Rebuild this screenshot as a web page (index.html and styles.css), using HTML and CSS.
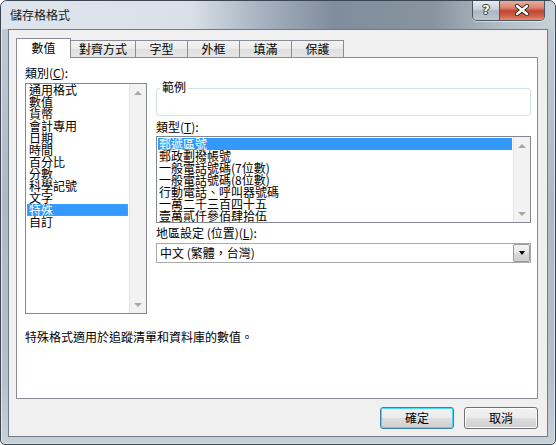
FILE: index.html
```html
<!DOCTYPE html>
<html lang="zh-Hant">
<head>
<meta charset="utf-8">
<title>儲存格格式</title>
<link rel="stylesheet" href="styles.css">
</head>
<body>
<div class="window">
  <div class="titlebar">
    <span class="title">儲存格格式</span>
    <div class="caption">
      <div class="cbtn help"><span>?</span></div>
      <div class="cbtn close">
        <svg width="16" height="12" viewBox="0 0 16 12">
          <path d="M3 2 L13 10 M13 2 L3 10" stroke="#3a2a28" stroke-width="4.2" stroke-linecap="round"/>
          <path d="M3 2 L13 10 M13 2 L3 10" stroke="#ffffff" stroke-width="2.4" stroke-linecap="round"/>
        </svg>
      </div>
    </div>
  </div>
  <div class="client">
    <div class="tabs">
      <div class="tab active">數值</div>
      <div class="tab wide">對齊方式</div>
      <div class="tab">字型</div>
      <div class="tab">外框</div>
      <div class="tab">填滿</div>
      <div class="tab">保護</div>
    </div>
    <div class="panel">
      <div class="content">
        <div class="leftcol">
          <div class="lbl">類別(<u>C</u>):</div>
          <div class="listbox catlist">
            <div class="items">
              <div class="item">通用格式</div>
              <div class="item">數值</div>
              <div class="item">貨幣</div>
              <div class="item">會計專用</div>
              <div class="item">日期</div>
              <div class="item">時間</div>
              <div class="item">百分比</div>
              <div class="item">分數</div>
              <div class="item">科學記號</div>
              <div class="item">文字</div>
              <div class="item sel focus">特殊</div>
              <div class="item">自訂</div>
            </div>
            <div class="scrollbar">
              <div class="arrow"><span class="tri up"></span></div>
              <div class="arrow"><span class="tri down"></span></div>
            </div>
          </div>
        </div>
        <div class="rightcol">
          <div class="sample"><span class="legend">範例</span></div>
          <div class="lbl gap5">類型(<u>T</u>):</div>
          <div class="listbox typelist">
            <div class="items">
              <div class="item sel">郵遞區號</div>
              <div class="item">郵政劃撥帳號</div>
              <div class="item">一般電話號碼(7位數)</div>
              <div class="item">一般電話號碼(8位數)</div>
              <div class="item">行動電話、呼叫器號碼</div>
              <div class="item">一萬二千三百四十五</div>
              <div class="item">壹萬貳仟參佰肆拾伍</div>
            </div>
            <div class="scrollbar">
              <div class="arrow"><span class="tri up"></span></div>
              <div class="arrow"><span class="tri down"></span></div>
            </div>
          </div>
          <div class="lbl gap4">地區設定 (位置)(<u>L</u>):</div>
          <div class="combo">
            <span class="combotext">中文 (繁體，台灣)</span>
            <div class="dropbtn"><span class="tri blk"></span></div>
          </div>
        </div>
      </div>
      <div class="desc">特殊格式適用於追蹤清單和資料庫的數值。</div>
    </div>
    <div class="buttons">
      <div class="btn default">確定</div>
      <div class="btn">取消</div>
    </div>
  </div>
</div>
</body>
</html>
```

FILE: styles.css
```css
* { box-sizing: border-box; }

html, body {
  margin: 0;
  padding: 0;
  background: #ffffff;
}

body {
  width: 556px;
  height: 445px;
  overflow: hidden;
  font-family: "Noto Sans CJK TC", "Liberation Sans", sans-serif;
  font-size: 12px;
  line-height: 12px;
  color: #000000;
}

u { text-decoration: underline; }

.window {
  width: 556px;
  height: 445px;
  border: 1px solid #3b4651;
  border-radius: 7px 7px 5px 5px;
  background: linear-gradient(to bottom, #c3ccd5 0%, #aeb9c4 45%, #b6c0ca 85%, #c8d0d8 100%);
  box-shadow: inset 1px 1px 0 #e6ebf0, inset -1px -1px 0 #d8dee4;
  padding: 0 7px 7px 7px;
  display: flex;
  flex-direction: column;
  overflow: hidden;
}

.titlebar {
  height: 28px;
  margin: 0 -7px;
  padding: 0 7px;
  display: flex;
  align-items: flex-start;
  background: linear-gradient(to right, #dfe5ec 0%, #d9e0e8 34%, #a6b2bf 47%, #808d9c 60%, #87949f 78%, #b5bfc9 91%, #c8d0d8 100%);
  border-radius: 6px 6px 0 0;
}

.title {
  margin-left: 2px;
  margin-top: 8px;
  color: #1a1a1a;
  line-height: 12px;
}

.caption {
  margin-left: auto;
  margin-right: 3px;
  margin-top: -1px;
  display: flex;
  height: 21px;
  border: 1px solid #4c5661;
  border-top: none;
  border-radius: 0 0 5px 5px;
  overflow: hidden;
  box-shadow: 0 1px 0 rgba(255,255,255,0.5);
}

.cbtn {
  height: 20px;
  display: flex;
  align-items: center;
  justify-content: center;
}

.help {
  width: 27px;
  background: linear-gradient(to bottom, #e9eef3 0%, #c9d2db 45%, #aab6c2 55%, #bcc7d1 100%);
  border-right: 1px solid #4c5661;
  font-family: "DejaVu Sans", sans-serif;
  font-weight: bold;
  font-size: 13px;
  color: #ffffff;
  text-shadow: 1px 0 0 #2d3640, -1px 0 0 #2d3640, 0 1px 0 #2d3640, 0 -1px 0 #2d3640;
}

.close {
  width: 44px;
  background: linear-gradient(to bottom, #eab3a5 0%, #d9826f 40%, #c5432e 55%, #d16a4f 85%, #e3917a 100%);
}

.client {
  flex: 1;
  background: #f0f0f0;
  border: 1px solid #6f7b88;
  padding: 8px 9px 0 7px;
  display: flex;
  flex-direction: column;
}

.tabs {
  display: flex;
  align-items: flex-end;
  height: 20px;
  margin-bottom: -1px;
  position: relative;
  z-index: 1;
}

.tab {
  height: 17px;
  min-width: 53px;
  margin-bottom: 1px;
  padding: 0 8px;
  border: 1px solid #898c95;
  border-bottom: none;
  margin-left: -1px;
  background: linear-gradient(to bottom, #f3f3f3 0%, #ebebeb 50%, #dedede 51%, #e6e6e6 100%);
  text-align: center;
  line-height: 15px;
  color: #000;
}

.tab.wide { min-width: 66px; }

.tab.active {
  margin-left: 0;
  height: 20px;
  margin-bottom: 0;
  min-width: 55px;
  margin-right: -1px;
  background: #ffffff;
  line-height: 17px;
  position: relative;
  z-index: 2;
}

.tab.active + .tab { margin-left: 0; }

.panel {
  height: 342px;
  background: #ffffff;
  border: 1px solid #898c95;
  padding: 9px 6px 0 8px;
}

.content {
  display: flex;
  gap: 9px;
}

.leftcol {
  width: 122px;
  display: flex;
  flex-direction: column;
}

.rightcol {
  width: 375px;
  display: flex;
  flex-direction: column;
}

.lbl {
  line-height: 12px;
  height: 12px;
  white-space: nowrap;
}

.gap5 { margin-top: 5px; }
.gap4 { margin-top: 4px; }

.listbox {
  border: 1px solid #828790;
  display: flex;
  background: #ffffff;
}

.catlist {
  margin-top: 4px;
  height: 231px;
}

.typelist {
  margin-top: 3px;
  height: 87px;
}

.items {
  flex: 1;
  padding: 0 1px;
}

.typelist .items { padding: 1px 1px; }

.item {
  height: 12px;
  line-height: 12px;
  padding-left: 2px;
  white-space: nowrap;
}

.typelist .item { padding-left: 1px; }

.item.sel {
  background: #3399ff;
  color: #ffffff;
}

.item.focus {
  outline: 1px dotted #d08040;
  outline-offset: -1px;
}

.scrollbar {
  width: 17px;
  background: #f2f2f2;
  border-left: 1px solid #e4e4e4;
  display: flex;
  flex-direction: column;
  justify-content: space-between;
}

.arrow {
  height: 17px;
  display: flex;
  align-items: center;
  justify-content: center;
}

.tri {
  width: 0;
  height: 0;
  border-left: 4px solid transparent;
  border-right: 4px solid transparent;
}

.tri.up { border-bottom: 4px solid #a7a7a7; }
.tri.down { border-top: 4px solid #a7a7a7; }
.tri.blk {
  border-left-width: 3px;
  border-right-width: 3px;
  border-top: 4px solid #000000;
}

.sample {
  position: relative;
  margin-top: 21px;
  height: 28px;
  border: 1px solid #d5dfe5;
  border-radius: 3px;
}

.legend {
  position: absolute;
  top: -8px;
  left: 3px;
  padding: 0 2px;
  background: #ffffff;
  line-height: 12px;
}

.combo {
  margin-top: 4px;
  height: 20px;
  border: 1px solid #a9a9a9;
  display: flex;
  align-items: center;
  padding-left: 3px;
  background: #ffffff;
}

.combotext { flex: 1; white-space: nowrap; }

.dropbtn {
  width: 17px;
  height: 18px;
  border: 1px solid #9a9a9a;
  border-radius: 2px;
  background: linear-gradient(to bottom, #f4f4f4 0%, #e8e8e8 50%, #dadada 51%, #cfcfcf 100%);
  display: flex;
  align-items: center;
  justify-content: center;
}

.desc {
  margin-top: 17px;
  line-height: 12px;
}

.buttons {
  margin-top: 8px;
  display: flex;
  justify-content: flex-end;
  gap: 10px;
}

.btn {
  width: 74px;
  height: 22px;
  border: 1px solid #707070;
  border-radius: 3px;
  background: linear-gradient(to bottom, #f2f2f2 0%, #ebebeb 48%, #dddddd 52%, #cfcfcf 100%);
  box-shadow: inset 0 0 0 1px #fcfcfc;
  display: flex;
  align-items: center;
  justify-content: center;
  line-height: 12px;
}

.btn.default {
  border-color: #3c7fb1;
  box-shadow: inset 0 0 0 1px #48d8fb;
}
```
